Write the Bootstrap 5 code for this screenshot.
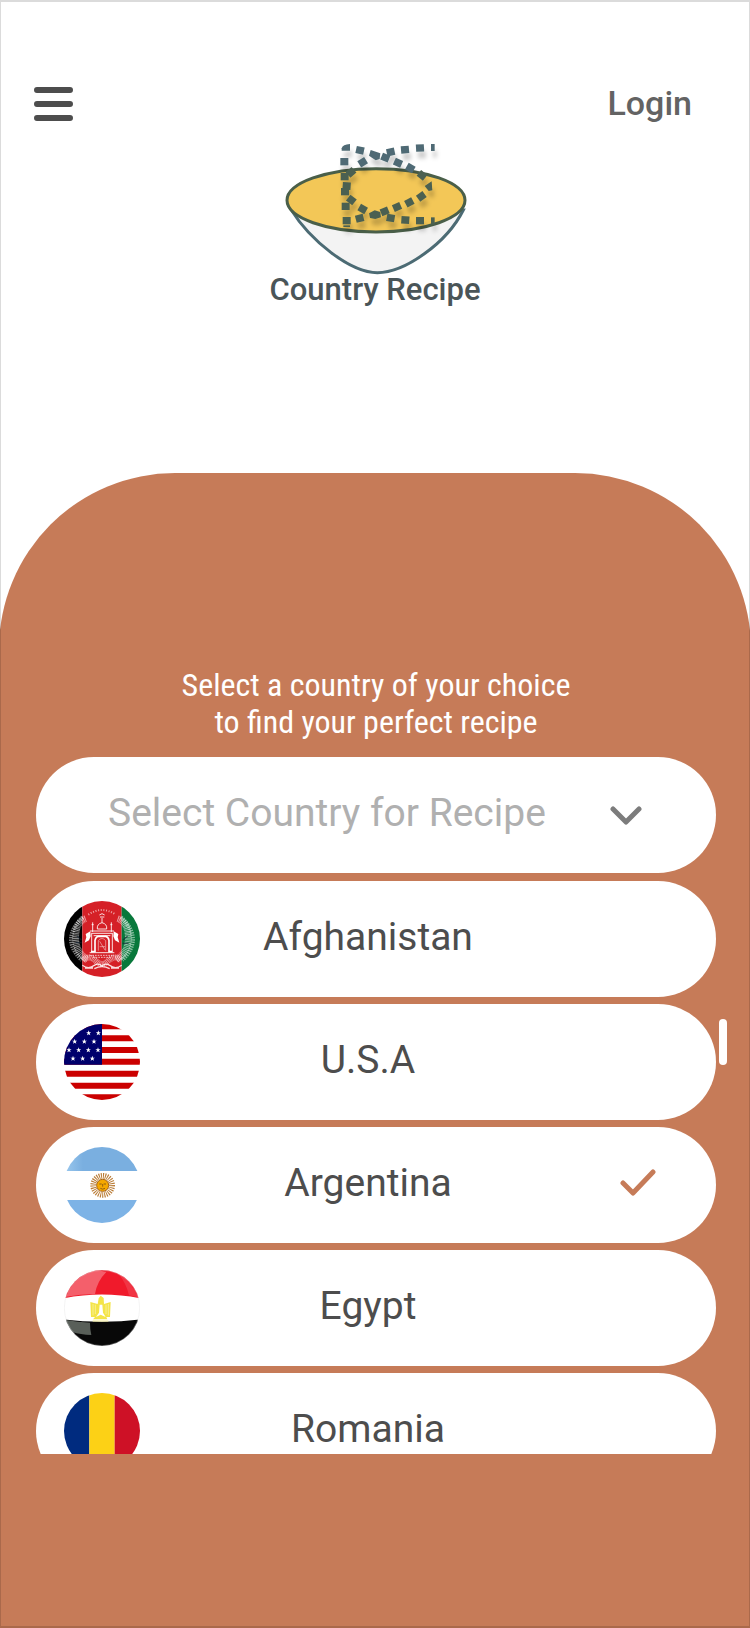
<!DOCTYPE html>
<html lang="en">
<head>
<meta charset="utf-8">
<meta name="viewport" content="width=device-width, initial-scale=1">
<title>Country Recipe</title>
<link rel="stylesheet" href="https://cdn.jsdelivr.net/npm/bootstrap@5.3.0/dist/css/bootstrap.min.css">
<style>
  :root { --clay: #c67b58; --ink: #4d4d4d; }
  body { font-family: Roboto, "Liberation Sans", sans-serif; color: var(--ink); background: #fff; }
  .screen { min-height: 100vh; overflow: hidden; }
  .screen::after { content: ""; position: absolute; inset: 0; border: 1px solid rgba(0,0,0,.14); border-width: 2px 1px; pointer-events: none; }
  .topbar { padding: 75px 58px 0 34px; height: 132px; }
  .login-link { font-size: 34px; font-weight: 500; color: #636363; }
  .brand { padding-top: 8px; height: 341px; }
  .brand-name { font-size: 31px; line-height: 28px; font-weight: 500; color: #4a5558; }
  .panel { background: var(--clay); border-radius: 176px 176px 0 0; margin: 0 -1px; padding: 194px 35px 0 37px; }
  .prompt { font-family: "Roboto Condensed", "Liberation Sans Narrow", Roboto, sans-serif; font-size: 32px; line-height: 37px; }
  .pill { height: 116px; border-radius: 58px; background-color: #fff; border: 0; font-size: 39px; color: var(--ink); }
  .country-select { appearance: none; color: #b0b0b0; padding: 0 150px 4px 72px; }
  .chevron { right: 74px; top: 49px; pointer-events: none; }
  .choices { height: 573px; gap: 7px; }
  .choice { padding: 0 60px 0 28px; }
  .choice-name, .slot { padding-bottom: 4px; }
  .slot { width: 60px; }
  .thumb { width: 8px; height: 46px; right: -11px; top: 138px; }
</style>
</head>
<body>
<div class="screen position-relative d-flex flex-column">
  <header class="topbar d-flex justify-content-between align-items-center">
    <button type="button" class="btn p-0 border-0 d-flex" aria-label="Menu">
      <svg width="39" height="34" viewBox="0 0 39 34" stroke="#4d4d4d" stroke-width="6" stroke-linecap="round"><path d="M3 3H36M3 17H36M3 31H36"/></svg>
    </button>
    <a href="#login" class="login-link text-decoration-none">Login</a>
  </header>

  <div class="brand d-flex flex-column align-items-center">
    <svg width="250" height="136" viewBox="0 30 750 408" aria-hidden="true">
      <defs>
        <rect id="d" x="-12" y="-11" width="24" height="22"/>
        <filter id="sh" x="-20%" y="-20%" width="150%" height="150%"><feDropShadow dx="6" dy="20" stdDeviation="7" flood-color="#000" flood-opacity=".2"/></filter>
      </defs>
      <path d="M124 240C180 330 300 428 382 428S590 340 640 240Z" fill="#f3f3f3" stroke="#4c6b74" stroke-width="9"/>
      <ellipse cx="378" cy="211" rx="267" ry="95" fill="#f3c757" stroke="#4a5f49" stroke-width="9"/>
      <g filter="url(#sh)">
        <g fill="#4f6b74">
          <path d="M275 62V55Q278 43 300 42V62Z"/>
          <use href="#d" transform="translate(330 61) rotate(12)"/>
          <path d="M362 60L391 70L389 87L377 91L357 77Z"/>
          <use href="#d" transform="translate(406 83) rotate(22)"/>
          <use href="#d" transform="translate(444 98) rotate(24)"/>
          <use href="#d" transform="translate(481 114) rotate(30)"/>
          <use href="#d" transform="translate(283 95)"/>
          <use href="#d" transform="translate(338 97) rotate(-32)"/>
          <use href="#d" transform="translate(422 66) rotate(-12)"/>
          <use href="#d" transform="translate(465 59) rotate(-5)"/>
          <use href="#d" transform="translate(510 54) rotate(-3)"/>
          <path d="M543 42H554V63H543Z"/>
        </g>
        <g fill="#4b6151">
          <use href="#d" transform="translate(303 127) rotate(-42)"/>
          <use href="#d" transform="translate(284 140)"/>
          <use href="#d" transform="translate(290 168) rotate(4)"/>
          <use href="#d" transform="translate(285 185)"/>
          <use href="#d" transform="translate(304 210) rotate(38)"/>
          <use href="#d" transform="translate(287 229)"/>
          <use href="#d" transform="translate(338 237) rotate(30)"/>
          <use href="#d" transform="translate(290 272)"/>
          <path d="M280 286H300V291H280Z"/>
          <use href="#d" transform="translate(329 265) rotate(-14)"/>
          <path d="M357 250L374 241L391 246L393 262L376 267L360 264Z"/>
          <use href="#d" transform="translate(404 244) rotate(-22)"/>
          <use href="#d" transform="translate(441 231) rotate(-24)"/>
          <use href="#d" transform="translate(478 217) rotate(-28)"/>
          <use href="#d" transform="translate(514 199) rotate(-36)"/>
          <path d="M524 168L545 154L547 181L536 183Z"/>
          <use href="#d" transform="translate(516 136) rotate(38)"/>
          <use href="#d" transform="translate(422 264) rotate(10)"/>
          <use href="#d" transform="translate(466 270) rotate(4)"/>
          <use href="#d" transform="translate(510 272)"/>
          <path d="M543 262H554V283H543Z"/>
        </g>
      </g>
    </svg>
    <div class="brand-name">Country Recipe</div>
  </div>

  <main class="panel flex-grow-1">
    <label for="country" class="prompt d-block text-center text-white mb-3">Select a country of your choice<br>to find your perfect recipe</label>
    <div class="position-relative mb-2">
      <select id="country" class="pill country-select d-block w-100">
        <option>Select Country for Recipe</option>
        <option>Afghanistan</option><option>U.S.A</option><option>Argentina</option><option>Egypt</option><option>Romania</option>
      </select>
      <svg class="chevron position-absolute" width="32" height="20" viewBox="0 0 32 20" fill="none" stroke="#7c7c7c" stroke-width="5" stroke-linecap="round" stroke-linejoin="round"><path d="M3 3L16 16L29 3"/></svg>
    </div>

    <div class="position-relative">
      <div class="choices d-flex flex-column overflow-hidden" role="listbox" aria-label="Countries">
        <button type="button" role="option" class="pill choice d-flex align-items-center flex-shrink-0 w-100">
          <svg width="76" height="76" viewBox="41 29 228 228" aria-hidden="true">
            <clipPath id="ca"><circle cx="155" cy="143" r="114"/></clipPath>
            <g clip-path="url(#ca)">
              <path d="M40 28H96V258H40Z" fill="#000"/><path d="M96 28H214V258H96Z" fill="#d52027"/><path d="M214 28H270V258H214Z" fill="#08783b"/>
              <g fill="none" stroke="#fff">
                <path d="M106 82Q76 92 76 142Q78 185 112 204M202 82Q234 92 234 142Q232 185 198 204" stroke-width="20" stroke-dasharray="3 2" opacity=".55"/>
                <path d="M97 78Q62 110 62 146Q64 178 94 206M212 78Q248 110 248 146Q246 178 216 206" stroke-width="12" stroke-dasharray="4 3" opacity=".5"/>
                <path d="M114 70Q155 42 196 70" stroke-width="6" stroke-dasharray="3 5" opacity=".6"/>
                <path d="M147 71Q155 63 163 71M149 77H162M155 80V94M141 113Q139 98 155 94Q171 98 169 113ZM127 93V122M183 93V122M124 100H130M180 100H186" stroke-width="3" opacity=".85"/>
                <path d="M119 119H191M123 126H187M124 126V183M186 126V183M130 133H180M118 184H192" stroke-width="3" opacity=".85"/>
                <path d="M122 181H134V147Q137 135 145 135H166Q174 136 176 147V181H185" stroke-width="5"/>
                <path d="M144 178V148Q155 135 166 148V178M148 150L164 176M148 166H164" stroke-width="2" opacity=".7"/>
                <path d="M118 192H192M128 198H182" stroke-width="3" stroke-dasharray="5 3" opacity=".7"/>
                <path d="M98 208Q116 188 138 210Q155 226 172 210Q194 188 212 208" stroke-width="18" stroke-dasharray="3 2" opacity=".55"/>
                <path d="M96 222Q115 236 132 222Q145 214 155 224Q165 214 178 222Q195 236 214 222M104 230H128M182 230H206M132 232Q155 220 178 232" stroke-width="4" opacity=".85"/>
                <path d="M80 134L93 146M76 154H94M218 146L232 134M217 156H235" stroke="#123" stroke-width="4" opacity=".6"/>
              </g>
              <path d="M120 120L106 128L108 138L103 154L116 147L121 135ZM190 120L204 128L202 138L207 154L194 147L189 135Z" fill="#fff"/>
            </g>
          </svg>
          <span class="choice-name flex-grow-1 text-center">Afghanistan</span><span class="slot" aria-hidden="true"></span>
        </button>
        <button type="button" role="option" class="pill choice d-flex align-items-center flex-shrink-0 w-100">
          <svg width="76" height="76" viewBox="41 29 228 228" aria-hidden="true">
            <clipPath id="cb"><circle cx="155" cy="143" r="114"/></clipPath>
            <g clip-path="url(#cb)">
              <path d="M40 28H270V258H40Z" fill="#fff"/>
              <path d="M40 28H270V45H40ZM40 63H270V81H40ZM40 98H270V116H40ZM40 133H270V151H40ZM40 169H270V187H40ZM40 205H270V223H40ZM40 240H270V258H40Z" fill="#cb0000"/>
              <path d="M40 28H155V151H40Z" fill="#00006c"/>
              <defs><path id="st" d="M0-8L2-2H8L3 1L5 7L0 4L-5 7L-3 1L-8-2H-2Z"/></defs>
              <g fill="#fff">
                <use href="#st" x="115" y="56"/><use href="#st" x="144" y="56"/>
                <use href="#st" x="73" y="81"/><use href="#st" x="102" y="81"/><use href="#st" x="131" y="81"/>
                <use href="#st" x="56" y="107"/><use href="#st" x="85" y="107"/><use href="#st" x="114" y="107"/><use href="#st" x="143" y="107"/>
                <use href="#st" x="68" y="132"/><use href="#st" x="97" y="132"/><use href="#st" x="126" y="132"/>
              </g>
            </g>
          </svg>
          <span class="choice-name flex-grow-1 text-center">U.S.A</span><span class="slot" aria-hidden="true"></span>
        </button>
        <button type="button" role="option" aria-selected="true" class="pill choice d-flex align-items-center flex-shrink-0 w-100">
          <svg width="76" height="76" viewBox="41 39 228 228" aria-hidden="true">
            <clipPath id="cc"><circle cx="155" cy="153" r="114"/></clipPath>
            <linearGradient id="ga"><stop offset="0" stop-color="#9cc9ee"/><stop offset=".25" stop-color="#7aafe0"/><stop offset="1" stop-color="#7aafe0"/></linearGradient>
            <g clip-path="url(#cc)">
              <path d="M40 38H270V268H40Z" fill="#fff"/>
              <path d="M40 38H270V111H40Z" fill="url(#ga)"/><path d="M40 198H270V268H40Z" fill="#7db3e6"/>
            </g>
            <circle cx="157" cy="154" r="28" fill="none" stroke="#b97b35" stroke-width="18" stroke-dasharray="3 3"/>
            <circle cx="157" cy="154" r="18" fill="#f5a800" stroke="#a96514" stroke-width="3"/>
            <path d="M147 150H154M160 150H167M157 150V158M150 163Q157 168 164 163" fill="none" stroke="#94600f" stroke-width="3"/>
          </svg>
          <span class="choice-name flex-grow-1 text-center">Argentina</span>
          <span class="slot d-flex justify-content-end" aria-hidden="true"><svg width="36" height="28" viewBox="0 0 36 28" fill="none" stroke="#c67b58" stroke-width="5" stroke-linecap="round" stroke-linejoin="round"><path d="M3 14L13 24L33 3"/></svg></span>
        </button>
        <button type="button" role="option" class="pill choice d-flex align-items-center flex-shrink-0 w-100">
          <svg width="76" height="76" viewBox="41 36 228 228" aria-hidden="true">
            <clipPath id="cd"><circle cx="155" cy="150" r="114"/></clipPath>
            <g clip-path="url(#cd)">
              <path d="M40 36H270V264H40Z" fill="#fff"/>
              <path d="M40 36H270V121Q155 98 40 121Z" fill="#f01a2b"/>
              <path d="M40 184Q155 199 270 184V264H40Z" fill="#080808"/>
              <path d="M48 116Q68 58 130 38Q150 36 168 42Q140 70 134 108Q90 108 48 116Z" fill="#fff" opacity=".3"/>
              <path d="M205 48Q242 68 262 118L236 112Q228 76 205 48Z" fill="#fff" opacity=".12"/>
              <path d="M47 186Q84 193 119 194Q119 214 123 231Q90 230 66 222Q50 206 47 186Z" fill="#a9b5a9" opacity=".5"/>
              <path d="M120 132L142 138L145 121L151 113L160 120L161 138L181 132L179 177H168L171 184H128L134 177H122Z" fill="#f4e448"/>
              <path d="M148 140H156L158 164L166 177L151 170L137 177L146 164Z" fill="#fff"/>
              <path d="M128 138V172M135 140V168M174 138V172M167 140V168M127 189H174" stroke="#f8ef93" stroke-width="3"/>
            </g>
            <circle cx="155" cy="150" r="113" fill="none" stroke="#ddd" stroke-width="1"/>
          </svg>
          <span class="choice-name flex-grow-1 text-center">Egypt</span><span class="slot" aria-hidden="true"></span>
        </button>
        <button type="button" role="option" class="pill choice d-flex align-items-center flex-shrink-0 w-100">
          <svg width="76" height="76" viewBox="41 29 228 228" aria-hidden="true">
            <clipPath id="ce"><circle cx="155" cy="143" r="114"/></clipPath>
            <g clip-path="url(#ce)"><path d="M40 28H117V258H40Z" fill="#002b7f"/><path d="M117 28H193V258H117Z" fill="#fcd116"/><path d="M193 28H270V258H193Z" fill="#ce1126"/></g>
          </svg>
          <span class="choice-name flex-grow-1 text-center">Romania</span><span class="slot" aria-hidden="true"></span>
        </button>
      </div>
      <div class="thumb position-absolute bg-white rounded-pill"></div>
    </div>
  </main>
</div>
<script src="https://cdn.jsdelivr.net/npm/bootstrap@5.3.0/dist/js/bootstrap.bundle.min.js"></script>
</body>
</html>
